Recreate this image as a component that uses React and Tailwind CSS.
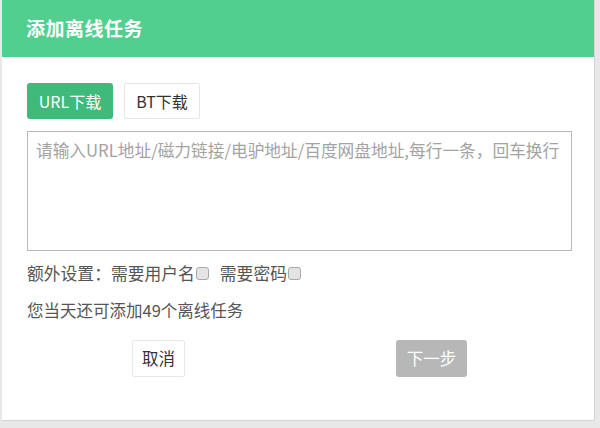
import React from 'react';

const font = { fontFamily: '"Noto Sans CJK SC", "Noto Sans", sans-serif' };

const Box = () => (
    <span className="inline-block shrink-0 w-[13px] h-[13px] rounded-[3px] border border-[#a9a9a9] bg-[#e4e4e4] ml-[1px]"></span>
);

const App = () => {
    return (
        <div className="w-[600px] h-[428px] bg-[#e8e8e8] pl-[2px] overflow-hidden" style={font}>
            <div className="w-[593px] h-[421px] bg-white border-r border-b border-[#d5d5d5]">
                {/* Header */}
                <div className="h-[57px] bg-[#50cf8f] flex items-center px-[24px]">
                    <h1 className="text-[19px] font-bold text-white tracking-[0.5px]">添加离线任务</h1>
                </div>

                <div className="px-[25px]">
                    {/* Tabs */}
                    <div className="flex gap-[11px] mt-[26px]">
                        <button className="w-[86px] h-[36px] bg-[#3fba7b] text-white text-[16px] rounded-[3px]">URL下载</button>
                        <button className="w-[76px] h-[36px] bg-white text-[#333] text-[16px] border border-[#e6e6e6] rounded-[2px]">BT下载</button>
                    </div>

                    <textarea
                        className="block mt-[12px] w-[545px] h-[120px] border border-[#b9b9b9] resize-none outline-none px-[8px] py-[6px] text-[16.7px] leading-[24px] text-[#333] placeholder:text-[#a3a3a3]"
                        placeholder="请输入URL地址/磁力链接/电驴地址/百度网盘地址,每行一条，回车换行"
                    ></textarea>

                    <div className="mt-[11px] flex items-center text-[16.8px] leading-[22px] text-[#555]">
                        <span>额外设置：需要用户名</span>
                        <Box />
                        <span className="ml-[11px]">需要密码</span>
                        <Box />
                    </div>

                    <p className="mt-[15px] text-[16.5px] leading-[22px] text-[#555]">您当天还可添加49个离线任务</p>

                    <div className="flex mt-[19px]">
                        <button className="ml-[105px] w-[53px] h-[37px] bg-white border border-[#e8e8e8] rounded-[2px] text-[16.5px] text-[#333]">取消</button>
                        <button className="ml-[211px] w-[71px] h-[37px] bg-[#b7b7b7] rounded-[3px] text-[16.5px] text-white">下一步</button>
                    </div>
                </div>
            </div>
        </div>
    );
};

export default App;
